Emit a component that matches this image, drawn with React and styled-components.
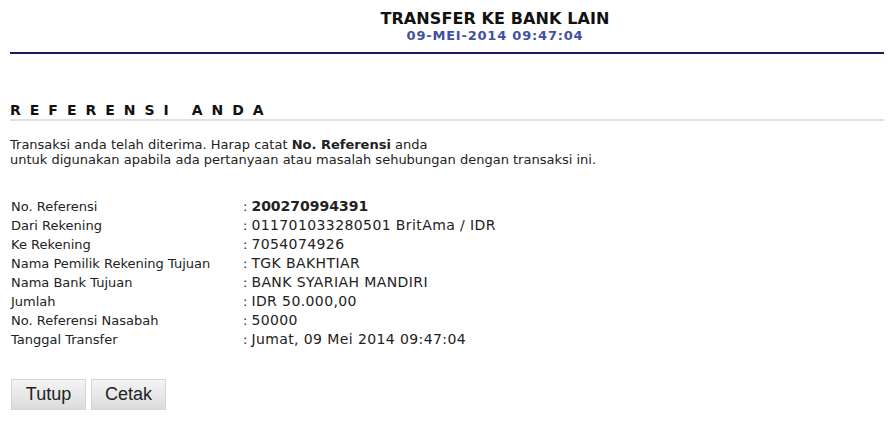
import React from "react";
import styled, { createGlobalStyle } from "styled-components";

const GlobalStyle = createGlobalStyle`
  body {
    margin: 0;
    background: #ffffff;
    font-family: "DejaVu Sans", Verdana, sans-serif;
    color: #222;
  }
`;

const Page = styled.div`
  width: 894px;
  padding: 0 10px;
  box-sizing: border-box;
`;

const Header = styled.div`
  padding: 10px 0 9px 96px;
  text-align: center;
  border-bottom: 2px solid #1c1c5e;
`;

const Title = styled.div`
  font-weight: bold;
  font-size: 16px;
  line-height: 18px;
  letter-spacing: 0.1px;
  color: #111;
`;

const Stamp = styled.div`
  font-weight: bold;
  font-size: 13px;
  line-height: 15px;
  letter-spacing: 0.8px;
  color: #3f51a0;
`;

const SectionTitle = styled.div`
  margin-top: 48px;
  font-weight: bold;
  font-size: 14px;
  line-height: 17px;
  letter-spacing: 9px;
  color: #111;
  border-bottom: 2px solid #e0e0e0;
`;

const Notice = styled.p`
  margin: 16px 0 0;
  font-size: 13px;
  line-height: 15px;
  color: #222;
`;

const Details = styled.div`
  margin-top: 30px;
  padding-left: 1px;
  display: grid;
  grid-template-columns: 232px 1fr;
  grid-auto-rows: 19px;
  font-size: 13px;
  line-height: 19px;
  color: #222;
`;

const Label = styled.div``;

const Value = styled.div`
  font-size: 14px;
  font-weight: ${(p) => (p.$strong ? "bold" : "normal")};
  letter-spacing: ${(p) => (p.$strong ? "0" : "0.4px")};
  &::before {
    content: ":";
    font-size: 13px;
    font-weight: normal;
    letter-spacing: 0;
    margin-right: 4px;
  }
`;

const Actions = styled.div`
  margin-top: 30px;
  padding-left: 1px;
  display: flex;
  gap: 5px;
`;

const Button = styled.button`
  width: 75px;
  height: 31px;
  font-family: "Liberation Sans", Arial, sans-serif;
  font-size: 18px;
  color: #222;
  border: 1px solid #d6d6d6;
  border-radius: 0;
  background: linear-gradient(#f4f4f4, #dcdcdc);
  padding: 0;
  cursor: pointer;
`;

const rows = [
  ["No. Referensi", "200270994391", true],
  ["Dari Rekening", "011701033280501 BritAma / IDR"],
  ["Ke Rekening", "7054074926"],
  ["Nama Pemilik Rekening Tujuan", "TGK BAKHTIAR"],
  ["Nama Bank Tujuan", "BANK SYARIAH MANDIRI"],
  ["Jumlah", "IDR 50.000,00"],
  ["No. Referensi Nasabah", "50000"],
  ["Tanggal Transfer", "Jumat, 09 Mei 2014 09:47:04"],
];

export default function App() {
  return (
    <Page>
      <GlobalStyle />
      <Header>
        <Title>TRANSFER KE BANK LAIN</Title>
        <Stamp>09-MEI-2014 09:47:04</Stamp>
      </Header>
      <SectionTitle>REFERENSI ANDA</SectionTitle>
      <Notice>
        Transaksi anda telah diterima. Harap catat <b>No. Referensi</b> anda
        <br />
        untuk digunakan apabila ada pertanyaan atau masalah sehubungan dengan
        transaksi ini.
      </Notice>
      <Details>
        {rows.map(([label, value, strong]) => (
          <React.Fragment key={label}>
            <Label>{label}</Label>
            <Value $strong={strong}>{value}</Value>
          </React.Fragment>
        ))}
      </Details>
      <Actions>
        <Button>Tutup</Button>
        <Button>Cetak</Button>
      </Actions>
    </Page>
  );
}
